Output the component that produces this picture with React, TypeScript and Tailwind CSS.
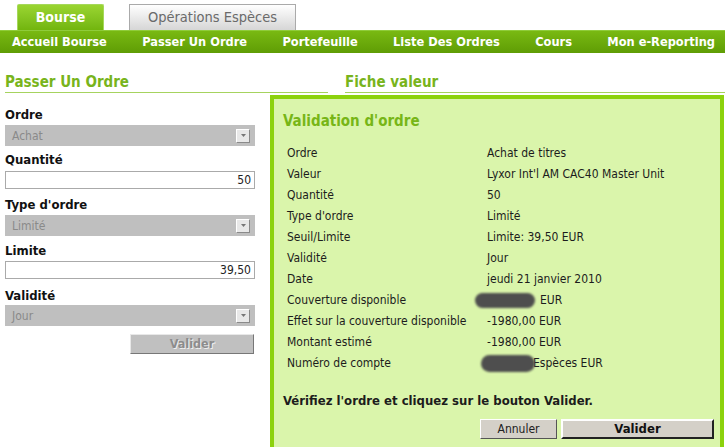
import React from "react";

const font = { fontFamily: '"DejaVu Sans Condensed", "DejaVu Sans", sans-serif' };

function Select({ value }: { value: string }) {
  return (
    <div className="flex h-[21px] w-[250px] items-center justify-between bg-[#bfbfbf] pl-[7px] pr-[5px]">
      <span className="text-[12px] text-[#8a8a8a]">{value}</span>
      <span className="flex h-[14px] w-[14px] items-center justify-center border border-t-[#fff] border-l-[#fff] border-r-[#8a8a8a] border-b-[#8a8a8a] bg-[#e8e8e8]">
        <svg width="5" height="3" viewBox="0 0 5 3"><path d="M0 0h5L2.5 3z" fill="#777" /></svg>
      </span>
    </div>
  );
}

function Input({ value }: { value: string }) {
  return (
    <div className="flex h-[18px] w-[250px] items-center justify-end border border-[#aaaaaa] bg-white pr-[3px] text-[12px] text-[#222]">
      {value}
    </div>
  );
}

function Label({ children }: { children: React.ReactNode }) {
  return <div className="text-[13px] font-bold leading-[14px] text-[#111]">{children}</div>;
}

const rows: [string, React.ReactNode][] = [
  ["Ordre", "Achat de titres"],
  ["Valeur", "Lyxor Int'l AM CAC40 Master Unit"],
  ["Quantité", "50"],
  ["Type d'ordre", "Limité"],
  ["Seuil/Limite", "Limite: 39,50 EUR"],
  ["Validité", "Jour"],
  ["Date", "jeudi 21 janvier 2010"],
  [
    "Couverture disponible",
    <span className="flex items-center">
      <span className="ml-[-12px] mr-[5px] inline-block h-[15px] w-[60px] rounded-full bg-[#4e4e4e] blur-[1px]" />
      EUR
    </span>,
  ],
  ["Effet sur la couverture disponible", "-1980,00 EUR"],
  ["Montant estimé", "-1980,00 EUR"],
  [
    "Numéro de compte",
    <span className="flex items-center">
      <span className="-mr-[2px] ml-[-6px] inline-block h-[17px] w-[54px] rounded-full bg-[#4e4e4e] blur-[1px]" />
      Espèces EUR
    </span>,
  ],
];

export default function App() {
  return (
    <div className="relative h-[447px] w-[725px] overflow-hidden bg-white" style={font}>
      {/* Tabs */}
      <div className="flex h-[30px] items-end pl-[17px]">
        <div className="flex h-[26px] w-[87px] items-center justify-center rounded-t-[2px] border border-b-0 border-[#a5d85a] bg-gradient-to-b from-[#9ad531] to-[#72b50d] text-[14px] font-bold text-white">
          Bourse
        </div>
        <div className="ml-[25px] flex h-[26px] w-[167px] items-center justify-center border border-b-0 border-[#aaaaaa] bg-gradient-to-b from-white to-[#d6d6d6] text-[14.5px] text-[#6a6a6a]">
          Opérations Espèces
        </div>
      </div>
      {/* Nav */}
      <div className="flex h-[23px] items-center justify-between border-t border-[#8fcc3a] bg-gradient-to-b from-[#79b912] to-[#5f9d05] pl-[12px] pr-[10px] text-[12.7px] font-bold text-white">
        <span>Accueil Bourse</span>
        <span>Passer Un Ordre</span>
        <span>Portefeuille</span>
        <span>Liste Des Ordres</span>
        <span>Cours</span>
        <span>Mon e-Reporting</span>
      </div>

      {/* Content */}
      <div className="flex pt-[20px]">
        <div className="ml-[5px] w-[323px]">
          <div className="border-b border-[#a6d35e] pb-[1px] text-[15px] font-bold leading-[18px] text-[#78b41c]">
            Passer Un Ordre
          </div>
          <div className="mt-[15px] flex flex-col">
            <Label>Ordre</Label>
            <div className="mt-[3px]"><Select value="Achat" /></div>
            <div className="mt-[7px]"><Label>Quantité</Label></div>
            <div className="mt-[4px]"><Input value="50" /></div>
            <div className="mt-[9px]"><Label>Type d'ordre</Label></div>
            <div className="mt-[3px]"><Select value="Limité" /></div>
            <div className="mt-[8px]"><Label>Limite</Label></div>
            <div className="mt-[3px]"><Input value="39,50" /></div>
            <div className="mt-[10px]"><Label>Validité</Label></div>
            <div className="mt-[2px]"><Select value="Jour" /></div>
            <div className="ml-[125px] mt-[8px] flex h-[20px] w-[124px] items-center justify-center border border-t-[#e8e8e8] border-l-[#e8e8e8] border-r-[#777] border-b-[#777] bg-[#c0c0c0] text-[12.5px] font-bold text-[#8c8c8c] [text-shadow:1px_1px_0_#eee]">
              Valider
            </div>
          </div>
        </div>
        <div className="ml-[17px] flex-1">
          <div className="border-b border-[#a6d35e] pb-[1px] text-[15px] font-bold leading-[18px] text-[#78b41c]">
            Fiche valeur
          </div>
        </div>
      </div>

      {/* Validation overlay */}
      <div className="absolute left-[270px] top-[95px] h-[360px] w-[454px] border-[4px] border-[#8cd20c] bg-[#daf5ab] pl-[9px] pr-[6px] pt-[13px] text-[#1c1c1c]">
        <div className="text-[15px] font-bold leading-[18px] text-[#77b617]">Validation d'ordre</div>
        <div className="mt-[12px] pl-[4px]">
          {rows.map(([k, v]) => (
            <div key={k} className="flex h-[21.1px] items-center text-[12px]">
              <span className="w-[200px]">{k}</span>
              <span>{v}</span>
            </div>
          ))}
        </div>
        <div className="mt-[17px] text-[13px] font-bold">Vérifiez l'ordre et cliquez sur le bouton Valider.</div>
        <div className="mt-[8px] flex justify-end pr-0">
          <div className="flex h-[20px] w-[77px] items-center justify-center border border-t-[#fff] border-l-[#fff] border-r-[#555] border-b-[#555] bg-[#d4d0c8] text-[12px] text-[#222]">
            Annuler
          </div>
          <div className="ml-[4px] flex h-[20px] w-[153px] items-center justify-center border-2 border-t-[#fff] border-l-[#fff] border-r-[#222] border-b-[#222] bg-[#d4d0c8] text-[13px] font-bold text-[#111]">
            Valider
          </div>
        </div>
      </div>
    </div>
  );
}
